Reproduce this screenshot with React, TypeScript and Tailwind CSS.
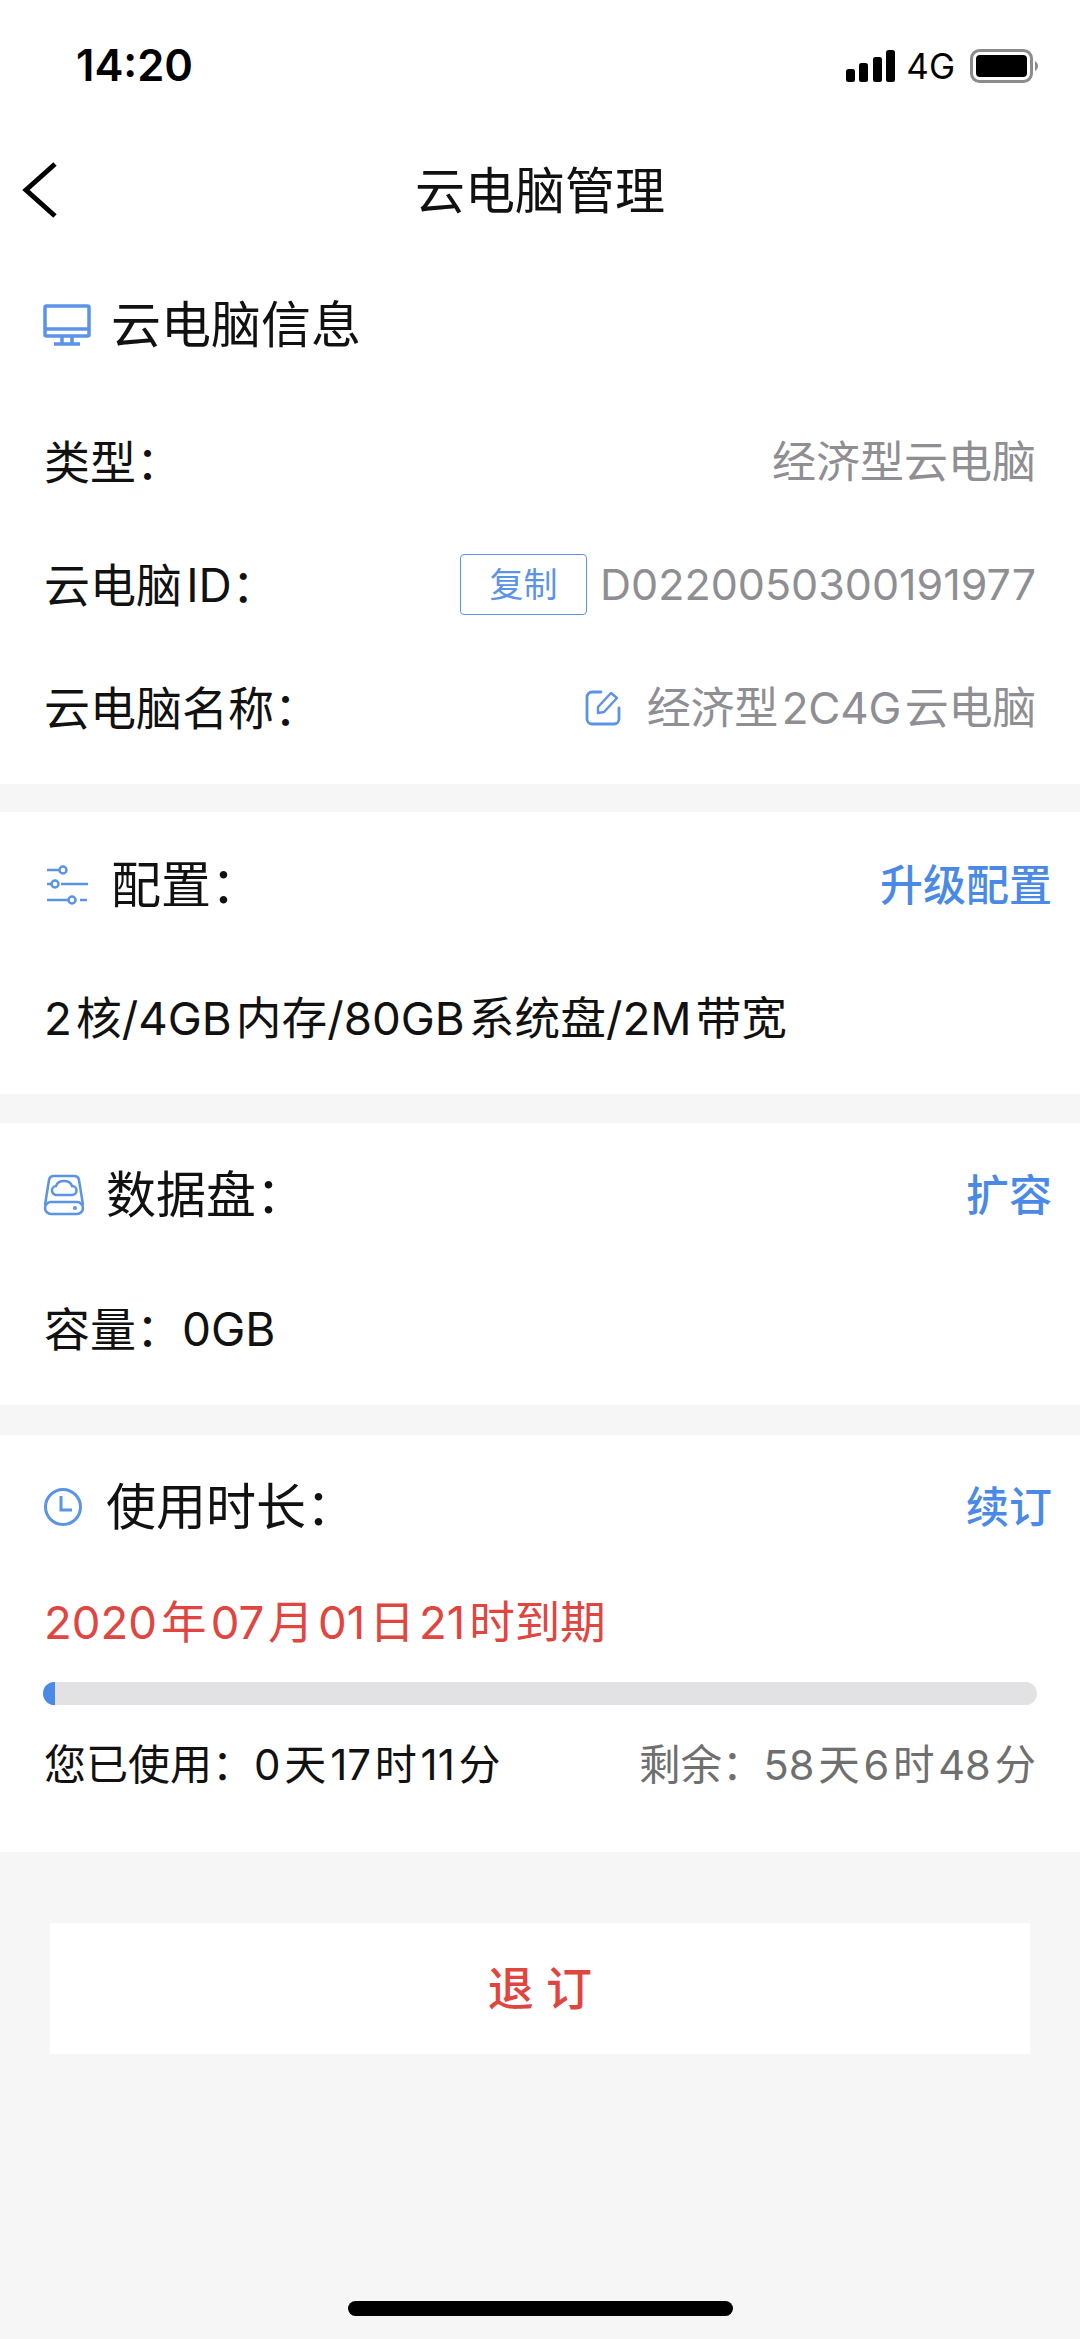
import { ReactNode } from 'react';

const FONT = "font-['Inter','Noto_Sans_CJK_SC',sans-serif]";
// the reference puts only a sliver of space between latin and CJK runs
const HS = '\u200a';

function MonitorIcon() {
    return (
        <svg width="48" height="42" viewBox="0 0 48 42" fill="none" stroke="#5b93e6" strokeWidth="3.5">
            <rect x="2" y="2" width="44" height="30" rx="1.5" />
            <path d="M2 25h44M19 32v7M29 32v7M11 40h26" />
        </svg>
    );
}

function SlidersIcon() {
    return (
        <svg className="ml-[4px]" width="42" height="40" viewBox="0 0 42 40" fill="none" stroke="#5b93e6" strokeWidth="2.5">
            <path d="M0 5h12" />
            <circle cx="16" cy="5" r="3.5" />
            <path d="M0 19h4" />
            <circle cx="8" cy="19" r="3.5" />
            <path d="M14 19h27" />
            <path d="M0 35h21" />
            <circle cx="25" cy="35" r="3.5" />
            <path d="M33 35h7" />
        </svg>
    );
}

function DiskIcon() {
    return (
        <svg width="42" height="42" viewBox="0 0 42 42" fill="none" stroke="#5b93e6" strokeWidth="2.5">
            <path d="M2 31 6 6a5 5 0 0 1 5-4h20a5 5 0 0 1 5 4l4 25" />
            <rect x="2" y="28" width="38" height="12" rx="6" />
            <path d="M14 21a4.5 4.5 0 0 1-1-9c1-3 4-5 8-5s7 2 8 5a4.5 4.5 0 0 1 0 9z" />
            <circle cx="32" cy="34" r="0.8" fill="#5b93e6" />
        </svg>
    );
}

function ClockIcon() {
    return (
        <svg width="40" height="40" viewBox="0 0 40 40" fill="none" stroke="#5b93e6" strokeWidth="3">
            <circle cx="20" cy="20" r="17.5" />
            <path d="M18 9v14h11" />
        </svg>
    );
}

function EditIcon() {
    return (
        <svg width="36" height="36" viewBox="0 0 36 36" fill="none" stroke="#5b93e6" strokeWidth="2.8" strokeLinecap="round">
            <path d="M16 2H7a5 5 0 0 0-5 5v22a5 5 0 0 0 5 5h22a5 5 0 0 0 5-5V18" />
            <path d="M13 23v-6L26 3l6 5-13 14z" strokeWidth="2.4" strokeLinejoin="round" />
        </svg>
    );
}

function SectionHead({ icon, title, gap, action }: { icon: ReactNode; title: string; gap: string; action?: string }) {
    return (
        <div className="flex items-center justify-between h-[110px] pl-[43px] pr-[28px]">
            <div className={`flex items-center ${gap}`}>
                <div className="w-[48px] flex items-center">{icon}</div>
                <span className="text-[50px] leading-none text-[#111]">{title}</span>
            </div>
            {action && <span className="text-[43px] leading-none font-medium text-[#4a8ae6]">{action}</span>}
        </div>
    );
}

function InfoRow({ label, children }: { label: string; children: ReactNode }) {
    return (
        <div className="flex items-center justify-between h-[123px] px-[44px]">
            <span className="text-[46px] leading-none text-[#111]">{label}</span>
            <div className="flex items-center text-[44px] leading-none text-[#8e8e93]">{children}</div>
        </div>
    );
}

export default function App() {
    return (
        <div className={`w-[1080px] h-[2339px] overflow-hidden bg-[#f6f6f6] flex flex-col relative ${FONT}`}>
            <div className="bg-white">
                {/* status bar */}
                <div className="flex items-center justify-between h-[132px] pl-[76px] pr-[41px]">
                    <span className="text-[43.5px] leading-none font-semibold text-black">14:20</span>
                    <div className="flex items-center">
                        <svg width="50" height="32" viewBox="0 0 50 32" fill="black">
                            <rect x="0" y="19" width="9" height="13" rx="2.5" />
                            <rect x="13" y="13" width="9" height="19" rx="2.5" />
                            <rect x="27" y="7" width="9" height="25" rx="2.5" />
                            <rect x="40" y="0" width="9" height="32" rx="2.5" />
                        </svg>
                        <span className="ml-[10px] text-[35px] leading-none text-black">4G</span>
                        <svg className="ml-[15px]" width="69" height="34" viewBox="0 0 69 34">
                            <rect x="1.5" y="1.5" width="60" height="31" rx="8" fill="none" stroke="#8c8c8c" strokeWidth="3" />
                            <rect x="6" y="6" width="51" height="22" rx="4" fill="black" />
                            <path d="M65 12c2 1 3 3 3 5s-1 4-3 5z" fill="#8c8c8c" />
                        </svg>
                    </div>
                </div>

                {/* nav bar */}
                <div className="flex items-center justify-center h-[118px] relative">
                    <svg className="absolute left-[22px] top-[30px]" width="36" height="56" viewBox="0 0 36 56" fill="none" stroke="black" strokeWidth="5">
                        <path d="M33 2 4 28l29 26" />
                    </svg>
                    <span className="text-[50px] leading-none text-[#111]">云电脑管理</span>
                </div>

                <div className="pt-[20px] pb-[15px]">
                    <SectionHead icon={<MonitorIcon />} title="云电脑信息" gap="gap-[20px]" />
                    <div className="h-[20px]" />
                    <InfoRow label="类型：">经济型云电脑</InfoRow>
                    <InfoRow label={`云电脑${HS}ID：`}>
                        <span className="flex items-center justify-center w-[127px] h-[61px] border-[1.5px] border-[#5b93e6] rounded-[4px] text-[34px] text-[#5b93e6]">复制</span>
                        <span className="ml-[13px] text-[43px]">D0220050300191977</span>
                    </InfoRow>
                    <InfoRow label="云电脑名称：">
                        <EditIcon />
                        <span className="ml-[26px] tracking-[-0.25px]">{`经济型${HS}2C4G${HS}云电脑`}</span>
                    </InfoRow>
                </div>
            </div>

            <div className="mt-[28px] h-[282px] bg-white">
                <div className="pt-[18px]">
                    <SectionHead icon={<SlidersIcon />} title="配置：" gap="gap-[20px]" action="升级配置" />
                </div>
                <p className="mt-[49px] px-[44px] text-[45.7px] leading-[60px] text-[#111]">{`2${HS}核/4GB${HS}内存/80GB${HS}系统盘/2M${HS}带宽`}</p>
            </div>

            <div className="mt-[29px] h-[282px] bg-white">
                <div className="pt-[17px]">
                    <SectionHead icon={<DiskIcon />} title="数据盘：" gap="gap-[15px]" action="扩容" />
                </div>
                <p className="mt-[49px] px-[44px] text-[46px] leading-[60px] text-[#111]">容量：0GB</p>
            </div>

            <div className="mt-[30px] h-[417px] bg-white">
                <div className="pt-[17px]">
                    <SectionHead icon={<ClockIcon />} title="使用时长：" gap="gap-[15px]" action="续订" />
                </div>
                <p className="mt-[31px] px-[44px] text-[45.5px] leading-[60px] text-[#e0463f]">{`2020${HS}年${HS}07${HS}月${HS}01${HS}日${HS}21${HS}时到期`}</p>
                <div className="mx-[43px] mt-[29px] h-[23px] rounded-full bg-[#e2e2e5] overflow-hidden">
                    <div className="w-[12px] h-full bg-[#4a8ae6]" />
                </div>
                <div className="flex items-center justify-between mt-[30px] px-[44px] leading-[60px]">
                    <span className="text-[42px] text-[#111]">{`您已使用：0${HS}天${HS}17${HS}时${HS}11${HS}分`}</span>
                    <span className="text-[41.5px] text-[#6f6f6f]">{`剩余：58${HS}天${HS}6${HS}时${HS}48${HS}分`}</span>
                </div>
            </div>

            <button className="mx-[50px] mt-[71px] h-[131px] bg-white text-[46px] font-medium text-[#e0463f]">退 订</button>

            {/* home indicator */}
            <div className="absolute left-[348px] top-[2301px] w-[385px] h-[15px] rounded-full bg-black" />
        </div>
    );
}
